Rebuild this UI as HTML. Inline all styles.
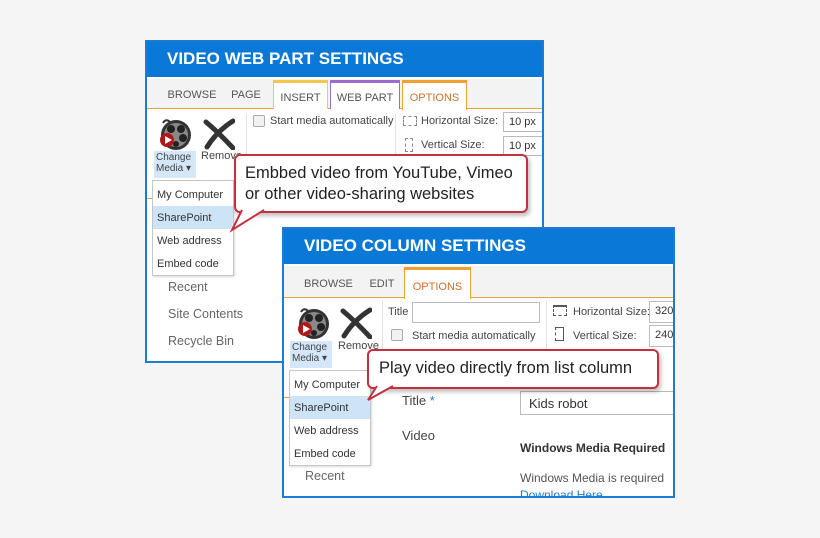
<!DOCTYPE html>
<html><head><style>
*{margin:0;padding:0;box-sizing:border-box}
body{width:820px;height:538px;background:#f5f5f5;position:relative;overflow:hidden;font-family:"Liberation Sans",sans-serif}
.a{position:absolute;white-space:nowrap}
.panel{position:absolute;background:#fff;border:2px solid #1e7bd4;overflow:hidden}
.hdr{position:absolute;left:0;right:0;top:0;height:35px;background:#0a78d6;color:#fff;font-weight:bold;font-size:17px;padding:7px 0 0 20px}
.s{font-size:11px;color:#444}
.tab{position:absolute;font-size:11px;color:#555;height:29px;padding-top:9px;text-align:center}
.inp{position:absolute;border:1px solid #bbb;background:#fff;font-size:11px;color:#333;padding:3px 5px}
.dd{position:absolute;background:#fff;border:1px solid #c6c6c6;box-shadow:1px 1px 2px rgba(0,0,0,.15);font-size:11px;color:#333}
.dd div{height:23px;padding:6px 4px 0}
.dd .hl{background:#cde4f7}
.cm{position:absolute;background:#d4e7f8;font-size:10px;color:#444;line-height:11px;padding:1px 2px;white-space:nowrap}
.call{position:absolute;background:#fff;border:2px solid #c4303c;border-radius:6px;box-shadow:2px 3px 4px rgba(0,0,0,.25);font-size:16.5px;color:#222;line-height:21px}
.nav{position:absolute;font-size:12.5px;color:#666}
.cb{position:absolute;width:12px;height:12px;border:1px solid #aaa;border-radius:2px;background:#f2f2f2}
</style></head><body>

<div class="panel" style="left:145px;top:40px;width:399px;height:323px">
 <div class="hdr">VIDEO WEB PART SETTINGS</div>
 <div class="a" style="left:0;right:0;top:37px;height:30px;background:#f3f3f3;border-bottom:1px solid #f0a030"></div>
 <div class="tab" style="left:20px;top:38px;width:50px">BROWSE</div>
 <div class="tab" style="left:82px;top:38px;width:34px">PAGE</div>
 <div class="tab" style="left:126px;top:38px;width:55px;border:1px solid #f2c84a;border-top:3px solid #f2c84a;border-bottom:none;background:#fff">INSERT</div>
 <div class="tab" style="left:183px;top:38px;width:70px;border:1px solid #9b6bd0;border-top:3px solid #9b6bd0;border-bottom:none;background:#fff">WEB PART</div>
 <div class="tab" style="left:255px;top:38px;width:65px;border:1px solid #f0a030;border-top:3px solid #f0a030;border-bottom:none;background:#fff;color:#d0702a;height:30px">OPTIONS</div>
 <div class="a" style="left:99px;top:72px;width:1px;height:80px;background:#e2e2e2"></div>
 <div class="a" style="left:248px;top:72px;width:1px;height:80px;background:#e2e2e2"></div>
 <div class="cb" style="left:106px;top:73px"></div>
 <div class="a s" style="left:123px;top:73px">Start media automatically</div>
 <div class="a" style="left:256px;top:74px;width:14px;height:10px;border:1px dashed #888"></div>
 <div class="a s" style="left:274px;top:73px">Horizontal Size:</div>
 <div class="inp" style="left:356px;top:70px;width:50px;height:20px">10 px</div>
 <div class="a" style="left:258px;top:96px;width:8px;height:14px;border:1px dashed #888"></div>
 <div class="a s" style="left:274px;top:97px">Vertical Size:</div>
 <div class="inp" style="left:356px;top:94px;width:50px;height:20px">10 px</div>
 <div class="a" style="left:0;top:156px;width:10px;height:1px;background:#f0a030"></div>
 <div class="nav" style="left:21px;top:238px">Recent</div>
 <div class="nav" style="left:21px;top:265px">Site Contents</div>
 <div class="nav" style="left:21px;top:292px">Recycle Bin</div>
</div>
<svg class="a" style="left:157px;top:117px" width="36" height="34" viewBox="0 0 36 34"><circle cx="19" cy="18" r="15" fill="#333"/><circle cx="19" cy="18" r="12" fill="#888"/><circle cx="14" cy="12" r="4" fill="#222"/><circle cx="24" cy="12" r="4" fill="#222"/><circle cx="26" cy="21" r="4" fill="#222"/><circle cx="19" cy="27" r="3" fill="#222"/><circle cx="10" cy="23" r="7" fill="#b01818"/><path d="M8 19l7 4-7 4z" fill="#fff"/><path d="M6 6q3-5 7-1" stroke="#333" fill="none" stroke-width="2"/></svg>
<svg class="a" style="left:203px;top:118px" width="32" height="32" viewBox="0 0 32 32"><path d="M3 4q12 10 27 26M30 3q-16 10-26 26" stroke="#333" stroke-width="5" fill="none" stroke-linecap="round"/></svg>
<div class="cm" style="left:154px;top:151px;width:42px;height:27px">Change<br>Media ▾</div>
<div class="a s" style="left:201px;top:150px">Remove</div>
<div class="dd" style="left:152px;top:180px;width:82px;height:96px;padding-top:2px">
 <div>My Computer</div><div class="hl">SharePoint</div><div>Web address</div><div>Embed code</div>
</div>
<div class="call" style="left:234px;top:154px;width:294px;height:59px;padding:7px 0 0 9px">Embbed video from YouTube, Vimeo<br>or other video-sharing websites</div>
<svg class="a" style="left:228px;top:208px" width="40" height="26"><path d="M14 2L4 22 36 2" fill="#fff" stroke="#c4303c" stroke-width="2"/></svg>

<div class="panel" style="left:282px;top:227px;width:393px;height:271px">
 <div class="hdr">VIDEO COLUMN SETTINGS</div>
 <div class="a" style="left:0;right:0;top:37px;height:32px;background:#f3f3f3;border-bottom:1px solid #f0a030"></div>
 <div class="tab" style="left:20px;top:40px;width:46px">BROWSE</div>
 <div class="tab" style="left:84px;top:40px;width:28px">EDIT</div>
 <div class="tab" style="left:120px;top:38px;width:67px;border:1px solid #f0a030;border-top:3px solid #f0a030;border-bottom:none;background:#fff;color:#d0702a;height:32px;padding-top:11px">OPTIONS</div>
 <div class="a" style="left:98px;top:72px;width:1px;height:60px;background:#e2e2e2"></div>
 <div class="a" style="left:262px;top:72px;width:1px;height:60px;background:#e2e2e2"></div>
 <div class="a s" style="left:104px;top:77px">Title</div>
 <div class="inp" style="left:128px;top:73px;width:128px;height:21px"></div>
 <div class="cb" style="left:107px;top:100px"></div>
 <div class="a s" style="left:128px;top:101px">Start media automatically</div>
 <div class="a" style="left:269px;top:76px;width:14px;height:11px;border:1px dashed #555;border-top:2px solid #555"></div>
 <div class="a s" style="left:289px;top:77px">Horizontal Size:</div>
 <div class="inp" style="left:365px;top:72px;width:40px;height:22px">320</div>
 <div class="a" style="left:271px;top:98px;width:9px;height:14px;border:1px solid #555;border-left:1px dashed #555"></div>
 <div class="a s" style="left:289px;top:101px">Vertical Size:</div>
 <div class="inp" style="left:365px;top:96px;width:40px;height:22px">240</div>
 <div class="a" style="left:0;top:168px;width:8px;height:1px;background:#f0a030"></div>
 <div class="a" style="left:118px;top:164px;font-size:13px;color:#444">Title <span style="color:#1e7bd4">*</span></div>
 <div class="inp" style="left:236px;top:162px;width:160px;height:24px;font-size:13px;padding:4px 8px">Kids robot</div>
 <div class="a" style="left:118px;top:199px;font-size:13px;color:#444">Video</div>
 <div class="a" style="left:236px;top:212px;font-size:12px;font-weight:bold;color:#333">Windows Media Required</div>
 <div class="a" style="left:236px;top:242px;font-size:12px;color:#555">Windows Media is required</div>
 <div class="a" style="left:236px;top:259px;font-size:12px;color:#1e7bd4">Download Here</div>
 <div class="nav" style="left:21px;top:240px">Recent</div>
</div>
<svg class="a" style="left:295px;top:306px" width="36" height="34" viewBox="0 0 36 34"><circle cx="19" cy="18" r="15" fill="#333"/><circle cx="19" cy="18" r="12" fill="#888"/><circle cx="14" cy="12" r="4" fill="#222"/><circle cx="24" cy="12" r="4" fill="#222"/><circle cx="26" cy="21" r="4" fill="#222"/><circle cx="19" cy="27" r="3" fill="#222"/><circle cx="10" cy="23" r="7" fill="#b01818"/><path d="M8 19l7 4-7 4z" fill="#fff"/><path d="M6 6q3-5 7-1" stroke="#333" fill="none" stroke-width="2"/></svg>
<svg class="a" style="left:340px;top:307px" width="32" height="32" viewBox="0 0 32 32"><path d="M3 4q12 10 27 26M30 3q-16 10-26 26" stroke="#333" stroke-width="5" fill="none" stroke-linecap="round"/></svg>
<div class="cm" style="left:290px;top:341px;width:42px;height:27px">Change<br>Media ▾</div>
<div class="a s" style="left:338px;top:340px">Remove</div>
<div class="dd" style="left:289px;top:370px;width:82px;height:96px;padding-top:2px">
 <div>My Computer</div><div class="hl">SharePoint</div><div>Web address</div><div>Embed code</div>
</div>
<div class="call" style="left:367px;top:349px;width:292px;height:40px;padding:7px 0 0 10px">Play video directly from list column</div>
<svg class="a" style="left:363px;top:384px" width="40" height="20"><path d="M14 2L5 16 30 2" fill="#fff" stroke="#c4303c" stroke-width="2"/></svg>
</body></html>
